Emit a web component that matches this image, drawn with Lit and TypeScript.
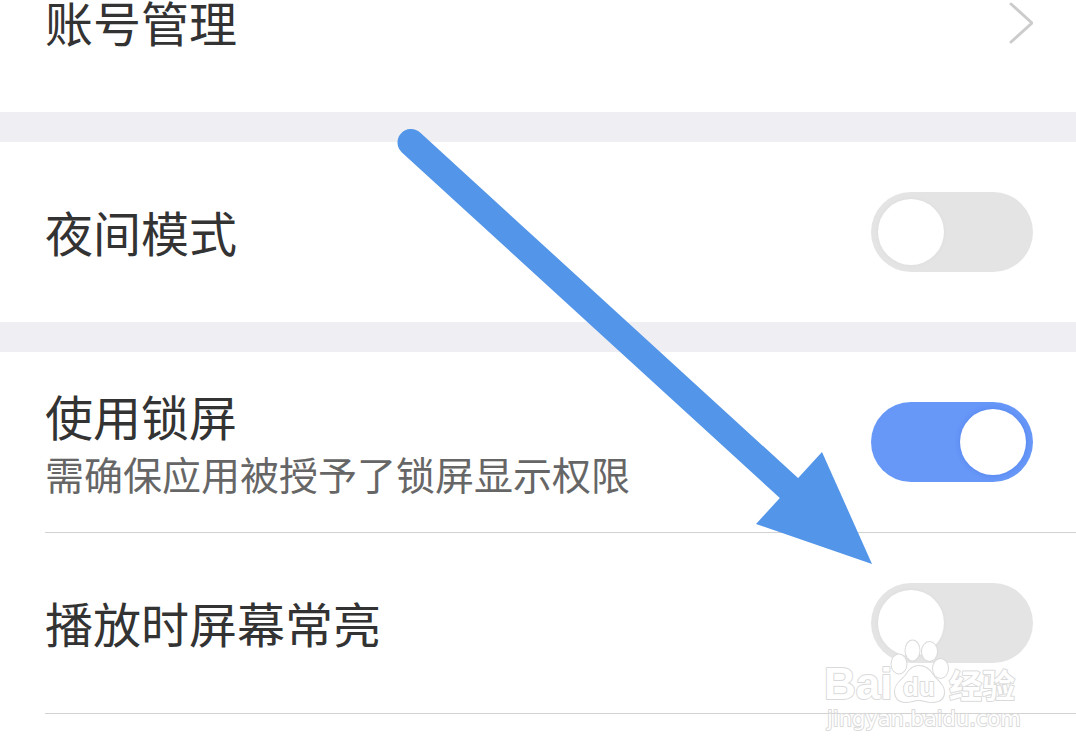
import { LitElement, html, css, nothing } from "lit";
import { customElement, property, state } from "lit/decorators.js";

interface Setting {
  id: string;
  title: string;
  note?: string;
  on: boolean;
}

@customElement("toggle-row")
class ToggleRow extends LitElement {
  @property({ attribute: false }) setting!: Setting;

  static styles = css`
    :host {
      display: block;
    }
    .row {
      display: flex;
      align-items: center;
      justify-content: space-between;
      box-sizing: border-box;
      min-height: 180px;
      padding: 0 43px 0 45px;
    }
    .text {
      display: flex;
      flex-direction: column;
      padding-bottom: 2px;
    }
    .title {
      font-size: 48px;
      line-height: 64px;
      color: #333;
    }
    .note {
      font-size: 39px;
      line-height: 52px;
      color: #666;
    }
    .switch {
      appearance: none;
      flex: none;
      box-sizing: border-box;
      width: 162px;
      height: 80px;
      margin: 0;
      padding: 7px;
      border-radius: 40px;
      background: #e4e4e4;
      cursor: pointer;
    }
    .switch::before {
      content: "";
      display: block;
      width: 66px;
      height: 66px;
      border-radius: 50%;
      background: #fff;
      box-shadow: 0 0 4px rgba(0, 0, 0, 0.04);
    }
    .switch:checked {
      background: #6797f7;
    }
    .switch:checked::before {
      margin-left: auto;
      box-shadow: 0 0 5px rgba(40, 90, 220, 0.3);
    }
  `;

  render() {
    const s = this.setting;
    return html`
      <div class="row">
        <label class="text" for=${s.id}>
          <span class="title">${s.title}</span>
          ${s.note ? html`<span class="note">${s.note}</span>` : nothing}
        </label>
        <input class="switch" type="checkbox" role="switch" id=${s.id} .checked=${s.on} />
      </div>
    `;
  }
}

@customElement("app-root")
class AppRoot extends LitElement {
  @state() private groups: Setting[][] = [
    [{ id: "night", title: "夜间模式", on: false }],
    [
      { id: "lock", title: "使用锁屏", note: "需确保应用被授予了锁屏显示权限", on: true },
      { id: "awake", title: "播放时屏幕常亮", on: false },
    ],
  ];

  static styles = css`
    :host {
      display: block;
      position: relative;
      min-height: 100vh;
      overflow: hidden;
      background: #fff;
      font-family: "Noto Sans CJK SC", "Noto Sans", sans-serif;
    }
    .account {
      display: flex;
      align-items: center;
      justify-content: space-between;
      padding: 0 43px 66px 45px;
      font-size: 48px;
      line-height: 42px;
      color: #333;
      text-decoration: none;
    }
    .account-title {
      padding-bottom: 4px;
    }
    .group {
      border-top: 30px solid #eeeef3;
    }
    .divider {
      height: 1px;
      margin: 0 0 0 45px;
      border: 0;
      background: #d2d2d2;
    }
    .arrow {
      position: absolute;
      left: 397px;
      top: 128px;
      pointer-events: none;
    }
    .watermark {
      position: absolute;
      right: 52px;
      top: 638px;
      pointer-events: none;
    }
    .mark {
      fill: #fff;
      stroke: #dadada;
      stroke-width: 2px;
      stroke-linejoin: round;
      paint-order: stroke;
    }
    .latin {
      font: 700 44px "Liberation Sans", sans-serif;
    }
    .du {
      font: 700 26px "Liberation Sans", sans-serif;
    }
    .hanzi {
      font: 700 33px "Noto Sans CJK SC", sans-serif;
    }
    .site {
      font: 400 21px "DejaVu Sans", sans-serif;
    }
  `;

  render() {
    return html`
      <a class="account" href="#account">
        <span class="account-title">账号管理</span>
        <svg width="26" height="42" viewBox="0 0 26 42" fill="none" aria-hidden="true">
          <path d="M4 2 L25 21 L4 40" stroke="#ccc" stroke-width="3" stroke-linecap="round" />
        </svg>
      </a>
      ${this.groups.map(
        (group) => html`
          <section class="group">
            ${group.map(
              (s, i) => html`
                ${i > 0 ? html`<hr class="divider" />` : nothing}
                <toggle-row .setting=${s}></toggle-row>
              `
            )}
          </section>
        `
      )}
      <hr class="divider" />
      <svg class="arrow" width="476" height="438" viewBox="397 128 476 438" aria-hidden="true">
        <path d="M411 142.500 L790 489" stroke="#5295e9" stroke-width="27" stroke-linecap="round" />
        <path d="M822 452 L872 564 L756 524 Z" fill="#5295e9" />
      </svg>
      <svg class="watermark" width="204" height="100" viewBox="820 638 204 100">
        <g class="mark">
          <text class="latin" x="824" y="699">Bai</text>
          <ellipse cx="899" cy="664" rx="7.500" ry="9.500" />
          <ellipse cx="912.500" cy="650.500" rx="7" ry="10" />
          <ellipse cx="929.500" cy="651.500" rx="7.500" ry="9.500" />
          <ellipse cx="940.500" cy="668.500" rx="7.500" ry="9.500" />
          <path
            d="M919 666 C925 666 930 670 933 675 C937 681 944 684 944 692 C944 699 939 702 932 702 C926 702 924 700 919 700 C914 700 911 702 906 702 C899 702 895 698 895 691 C895 684 902 680 906 675 C909 670 913 666 919 666 Z"
          />
          <text class="du" x="903" y="696">du</text>
          <text class="hanzi" x="949" y="698">经验</text>
          <text class="site" x="827" y="726">jingyan.baidu.com</text>
        </g>
      </svg>
    `;
  }
}
